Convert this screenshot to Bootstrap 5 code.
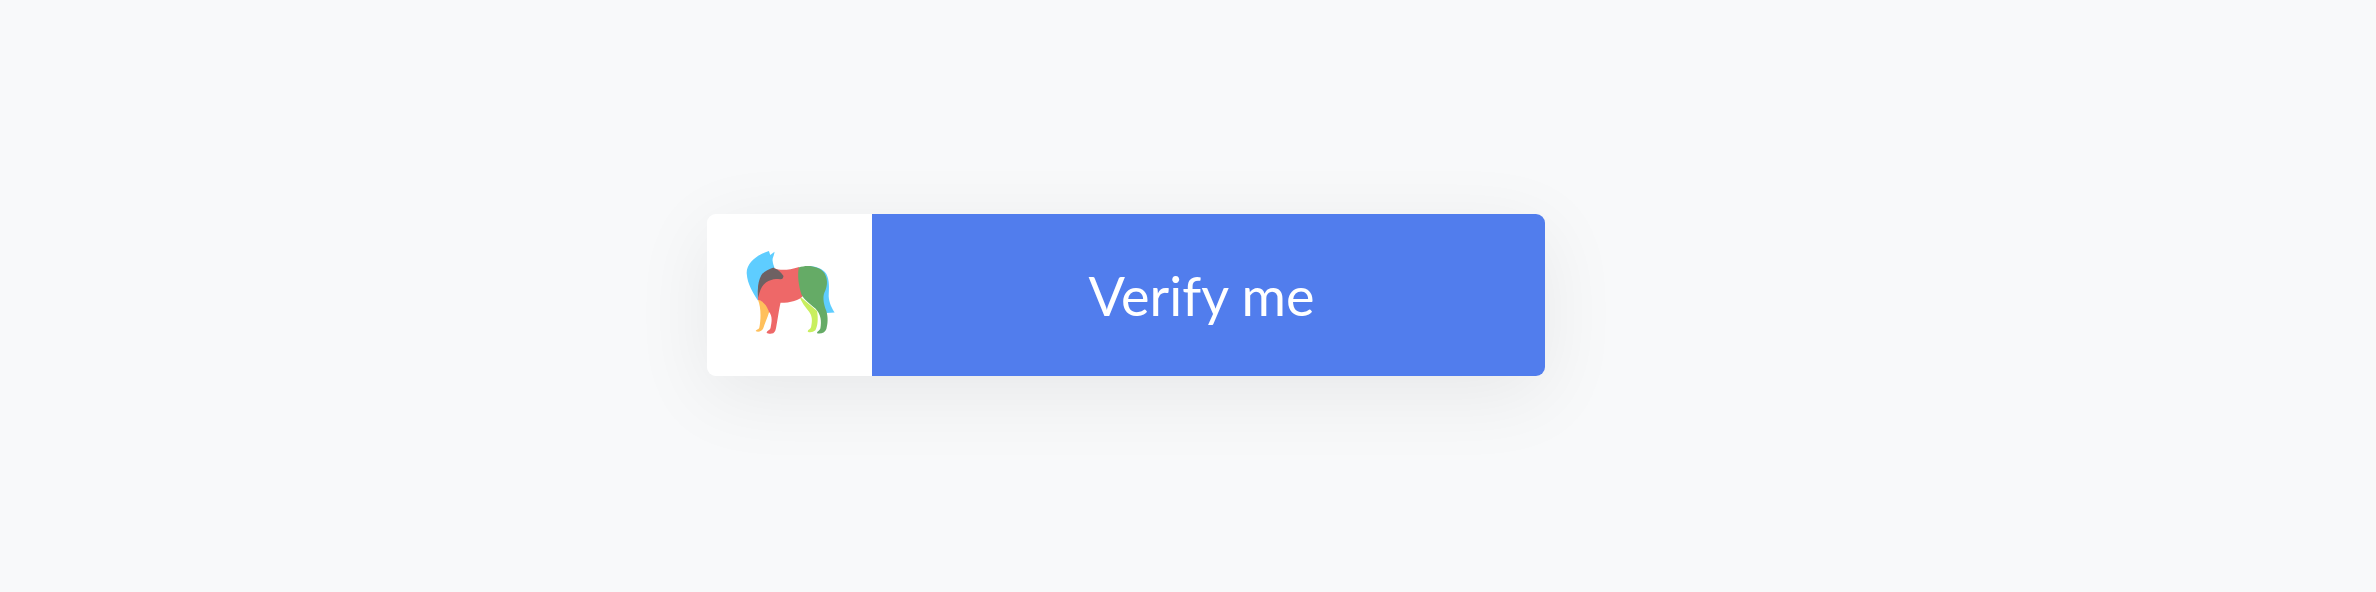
<!DOCTYPE html>
<html lang="en">
<head>
<meta charset="utf-8">
<title>Verify me</title>
<link href="https://cdn.jsdelivr.net/npm/bootstrap@5.3.0/dist/css/bootstrap.min.css" rel="stylesheet">
<style>
html, body { height: 100%; }
body { background: #f8f9fa; font-family: "Lato", "Noto Sans", sans-serif; overflow: hidden; }
.stage { height: 592px; padding: 214px 0 216px 707px; }
.verify-box { width: 838px; height: 162px; border-radius: 9px; overflow: hidden; }
.verify-wrap { width: 838px; border-radius: 9px; box-shadow: 0 18px 80px rgba(0,0,0,.07); }
.logo-cell { width: 165px; background: #fff; }
.logo-cell svg { width: 93px; height: 88px; margin-left: 2px; margin-top: -6px; }
.verify-btn { background: #517ded; color: #fff; font-size: 54px; line-height: 1; border: 0; border-radius: 0; padding: 2px 14px 0 0; }
.verify-btn:hover, .verify-btn:focus { background: #517ded; color: #fff; }
</style>
</head>
<body>
<div class="stage">
  <div class="verify-wrap">
  <div class="verify-box d-flex">
    <div class="logo-cell d-flex align-items-center justify-content-center flex-shrink-0">
      <svg viewBox="130 130 280 265" aria-label="Wolf logo" role="img">
        <path fill="#5ecdff" d="M205 139 L209 151 L222 141 C221 152 215 160 216 168 C217 178 220 184 222 190 L220 240 L172 288 C158 265 140 240 138 205 C138 172 175 148 205 139 Z"/>
        <path fill="#5ecdff" d="M320 184 C345 184 368 192 378 208 C388 228 386 250 385 275 C386 295 395 312 403 324 L378 326 L350 260 Z"/>
        <path fill="#ffc05c" d="M172 286 C188 288 200 300 206 322 C200 342 192 358 188 372 C184 381 172 385 165 380 C166 375 174 376 176 370 C181 345 182 310 172 286 Z"/>
        <path fill="#c9ef5f" d="M296 274 L350 320 C354 345 352 365 345 378 C338 384 328 385 322 382 C322 375 330 376 332 368 C336 350 336 335 326 322 C314 308 302 292 296 274 Z"/>
        <path fill="#ee6868" d="M222 191 C238 198 262 198 296 187 L310 272 C296 288 270 295 240 295 C236 312 232 340 228 362 C226 376 224 383 218 387 C210 389 202 388 198 385 C200 378 208 378 210 370 C214 350 216 335 205 322 C198 300 186 290 172 286 C170 255 172 230 190 208 Z"/>
        <path fill="#65ab66" d="M295 189 C320 180 355 184 372 205 C382 222 382 240 375 258 C366 272 368 295 378 320 C384 340 382 360 378 374 C374 386 362 389 350 387 C349 381 358 380 360 372 C364 350 362 330 345 312 C330 300 310 285 303 270 C295 245 290 215 295 189 Z"/>
        <path fill="#6e6162" d="M219 189 L222 192 C232 195 242 204 249 214 C248 220 246 224 240 224 C230 224 222 222 212 226 C190 232 178 250 173 280 C170 255 172 230 182 212 C190 200 205 194 219 189 Z"/>
      </svg>
    </div>
    <button type="button" class="btn verify-btn flex-grow-1 d-flex align-items-center justify-content-center">Verify me</button>
  </div>
  </div>
</div>
<script src="https://cdn.jsdelivr.net/npm/bootstrap@5.3.0/dist/js/bootstrap.bundle.min.js"></script>
</body>
</html>
